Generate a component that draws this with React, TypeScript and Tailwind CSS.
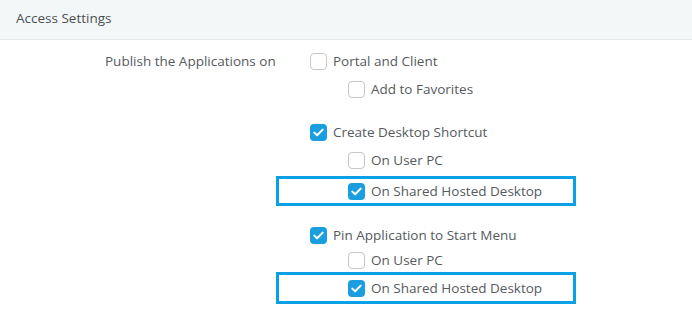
import React from "react";

function Box({ checked }: { checked?: boolean }) {
  return checked ? (
    <span className="flex h-[17px] w-[17px] shrink-0 items-center justify-center rounded-[4px] bg-[#1b9ee0]">
      <svg width="11" height="9" viewBox="0 0 11 9" fill="none">
        <path d="M1.3 4.6 L4.1 7.3 L9.7 1.6" stroke="white" strokeWidth="2" strokeLinecap="round" strokeLinejoin="round" />
      </svg>
    </span>
  ) : (
    <span className="h-[17px] w-[17px] shrink-0 rounded-[4px] border-[1.5px] border-[#c6c6c6] bg-white" />
  );
}

function Row({ checked, label, level, h = "h-[28px]" }: { checked?: boolean; label: string; level: 1 | 2; h?: string }) {
  return (
    <div className={`flex items-center gap-[6px] ${h} ${level === 2 ? "pl-[38px]" : ""}`}>
      <Box checked={checked} />
      <span>{label}</span>
    </div>
  );
}

function Highlight({ label, mt, h }: { label: string; mt: string; h: string }) {
  return (
    <div className={`-ml-[34px] flex w-[300px] items-center gap-[6px] border-[3px] border-[#0aa0e6] pl-[69px] ${mt} ${h}`}>
      <Box checked />
      <span>{label}</span>
    </div>
  );
}

export default function App() {
  return (
    <div className="h-[318px] w-[692px] bg-white text-[13.5px] text-[#555a5e]" style={{ fontFamily: '"Open Sans", "Noto Sans", sans-serif' }}>
      <div className="flex h-[40px] items-center border-b border-[#e4e9eb] bg-[#f4f7f8] pl-[16px] pb-[2px] text-[#4a4f53]">
        Access Settings
      </div>
      <div className="flex pt-[7px]">
        <div className="flex h-[28px] w-[310px] shrink-0 items-center pl-[105px]">Publish the Applications on</div>
        <div className="flex flex-col">
          <Row label="Portal and Client" level={1} />
          <Row label="Add to Favorites" level={2} />
          <div className="h-[15px]" />
          <Row checked label="Create Desktop Shortcut" level={1} />
          <Row label="On User PC" level={2} />
          <Highlight label="On Shared Hosted Desktop" mt="mt-[2px]" h="h-[30px]" />
          <div className="h-[15px]" />
          <Row checked label="Pin Application to Start Menu" level={1} />
          <Row label="On User PC" level={2} h="h-[23px]" />
          <Highlight label="On Shared Hosted Desktop" mt="mt-0" h="h-[32px]" />
        </div>
      </div>
    </div>
  );
}
